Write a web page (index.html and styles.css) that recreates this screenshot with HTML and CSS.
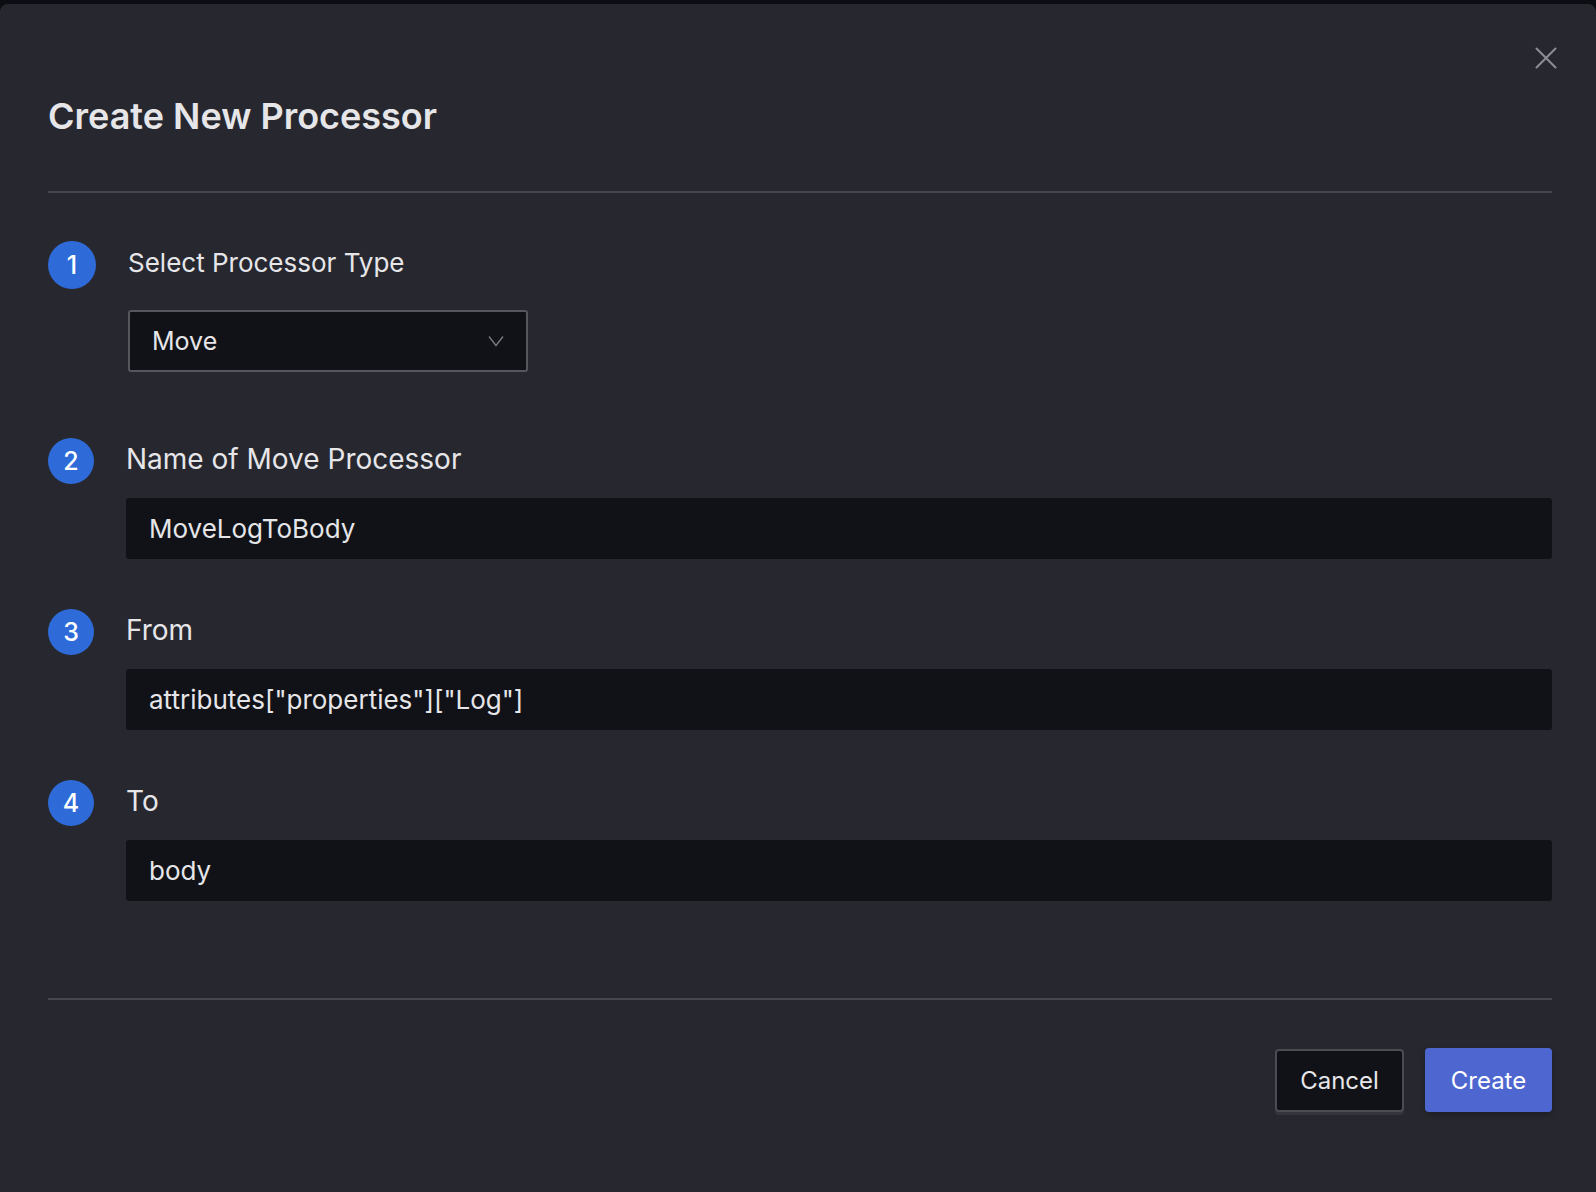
FILE: index.html
```html
<!DOCTYPE html>
<html lang="en">
<head>
  <meta charset="UTF-8"/>
  <meta name="viewport" content="width=device-width, initial-scale=1"/>
  <title>Create New Processor</title>
  <link rel="stylesheet" href="styles.css">
</head>
<body>
  <div class="dialog" role="dialog" aria-labelledby="dialogTitle">
    <button class="close-btn" aria-label="Close">
      <svg width="22" height="22" viewBox="0 0 22 22" fill="none" stroke="currentColor" stroke-width="2" stroke-linecap="round">
        <path d="M1.5 1.5 L20.5 20.5 M20.5 1.5 L1.5 20.5"/>
      </svg>
    </button>

    <header class="dialog-header">
      <h1 id="dialogTitle">Create New Processor</h1>
    </header>

    <div class="steps">
      <section class="step step-type">
        <span class="step-num">1</span>
        <label class="step-label" for="procType">Select Processor Type</label>
        <div class="select">
          <span id="procType">Move</span>
          <svg class="chevron" width="16" height="12" viewBox="0 0 16 12" fill="none" stroke="currentColor" stroke-width="1.4">
            <path d="M1 1.5 L8 10.5 L15 1.5"/>
          </svg>
        </div>
      </section>

      <section class="step">
        <span class="step-num">2</span>
        <label class="step-label" for="procName">Name of Move Processor</label>
        <input class="field" id="procName" type="text" value="MoveLogToBody">
      </section>

      <section class="step">
        <span class="step-num">3</span>
        <label class="step-label" for="procFrom">From</label>
        <input class="field" id="procFrom" type="text" value='attributes["properties"]["Log"]'>
      </section>

      <section class="step">
        <span class="step-num">4</span>
        <label class="step-label" for="procTo">To</label>
        <input class="field" id="procTo" type="text" value="body">
      </section>
    </div>

    <footer class="dialog-footer">
      <button class="btn btn-cancel">Cancel</button>
      <button class="btn btn-create">Create</button>
    </footer>
  </div>
</body>
</html>
```

FILE: styles.css
```css
/* COLORS */
:root {
  --bg-page: #0b0d13;
  --bg-dialog: #27282f;
  --bg-field: #111217;
  --text-primary: #e6e6e9;
  --text-muted: #8d8e93;
  --border-field: #56575e;
  --divider: #46474e;
  --step-blue: #2f6bd8;
  --btn-primary: #4e66d0;
}

* { box-sizing:border-box; margin:0; padding:0 }
html, body {
  background: var(--bg-page);
  font-family: Inter, "Noto Sans", sans-serif;
  color: var(--text-primary);
}

/* DIALOG SHELL */
.dialog {
  position:relative;
  margin-top:4px;
  min-height:1188px;
  background: var(--bg-dialog);
  border-radius:8px 8px 0 0;
  padding:0 44px 0 48px;
}
.close-btn {
  position:absolute;
  top:43px; right:39px;
  background:none;
  border:none;
  color: var(--text-muted);
  line-height:0;
  cursor:pointer;
}

.dialog-header {
  padding-top:90px;
  padding-bottom:53px;
  border-bottom:2px solid var(--divider);
}
.dialog-header h1 {
  font-size:36px;
  line-height:44px;
  font-weight:600;
}

/* STEPS */
.steps {
  display:flex;
  flex-direction:column;
  gap:50px;
  padding:48px 0 97px;
  border-bottom:2px solid var(--divider);
}
.step {
  --num-size:46px;
  display:grid;
  grid-template-columns:var(--num-size) 1fr;
  column-gap:32px;
  row-gap:14px;
  align-items:start;
}
.step-type {
  --num-size:48px;
  row-gap:21px;
  margin-bottom:16px;
}

.step-num {
  width:var(--num-size); height:var(--num-size);
  border-radius:50%;
  background: var(--step-blue);
  color:#fff;
  font-size:25px;
  font-weight:500;
  display:flex;
  align-items:center;
  justify-content:center;
}
.step-label {
  font-size:28px;
  line-height:42px;
  font-weight:400;
}
.step-type .step-label {
  font-size:26px;
  line-height:44px;
}

.field, .select {
  grid-column:2;
  height:61px;
  background: var(--bg-field);
  border:none;
  border-radius:3px;
  padding:0 23px;
  font-family:inherit;
  font-size:26px;
  color: var(--text-primary);
  outline:none;
}
.select {
  width:400px;
  height:62px;
  border:2px solid var(--border-field);
  display:flex;
  align-items:center;
  justify-content:space-between;
  padding:0 22px;
  font-size:25px;
}
.chevron { color:#77787e; }

/* FOOTER */
.dialog-footer {
  display:flex;
  justify-content:flex-end;
  gap:21px;
  padding-top:48px;
}
.btn {
  height:64px;
  border-radius:4px;
  font-family:inherit;
  font-size:24px;
  font-weight:400;
  cursor:pointer;
}
.btn-cancel {
  width:129px;
  height:63px;
  margin-top:1px;
  background: var(--bg-field);
  color: var(--text-primary);
  border:2px solid #4b4c53;
  box-shadow:0 3px 0 #35363d;
}
.btn-create {
  width:127px;
  background: var(--btn-primary);
  color:#fff;
  border:none;
  box-shadow:0 3px 6px rgba(0,0,0,.25);
}
```
